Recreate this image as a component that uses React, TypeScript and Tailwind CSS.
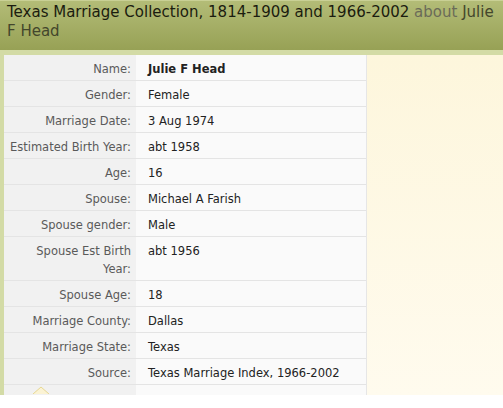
const rows: { label: string[]; value: string; bold?: boolean }[] = [
  { label: ['Name:'], value: 'Julie F Head', bold: true },
  { label: ['Gender:'], value: 'Female' },
  { label: ['Marriage Date:'], value: '3 Aug 1974' },
  { label: ['Estimated Birth Year:'], value: 'abt 1958' },
  { label: ['Age:'], value: '16' },
  { label: ['Spouse:'], value: 'Michael A Farish' },
  { label: ['Spouse gender:'], value: 'Male' },
  { label: ['Spouse Est Birth', 'Year:'], value: 'abt 1956' },
  { label: ['Spouse Age:'], value: '18' },
  { label: ['Marriage County:'], value: 'Dallas' },
  { label: ['Marriage State:'], value: 'Texas' },
  { label: ['Source:'], value: 'Texas Marriage Index, 1966-2002' },
]

export default function App() {
  return (
    <div className="h-[408px] w-[503px] bg-white font-['DejaVu_Sans',Verdana,sans-serif]">
      {/* Title bar */}
      <div className="h-[50px] border-t border-[#c9d095] bg-gradient-to-b from-[#b3bc77] to-[#97a155] px-[7px] pt-[2px] text-[15px] leading-[19px] text-[#1b1c0f]">
        Texas Marriage Collection, 1814-1909 and 1966-2002{' '}
        <span className="text-[#6a6b58]">about</span>{' '}
        <span className="text-[#43462c]">Julie F Head</span>
      </div>

      {/* Body */}
      <div className="flex h-[345px] bg-[#d3dba6] pl-[4px] pt-[5px]">
        <div className="flex w-[363px] flex-col border-r border-[#e6e6e6] text-[11.5px] leading-[18px]">
          {rows.map((r) => (
            <div key={r.label.join(' ')} className="flex border-b border-[#e4e4e4]">
              <div className="w-[132px] shrink-0 bg-[#f1f1f1] pb-[2px] pr-[5px] pt-[5px] text-right text-[#5a5a5a]">
                {r.label.map((l) => (
                  <div key={l}>{l}</div>
                ))}
              </div>
              <div
                className={
                  'flex-1 bg-[#fafafa] pb-[2px] pl-[12px] pt-[5px] text-[#222] ' +
                  (r.bold ? 'font-bold' : '')
                }
              >
                {r.value}
              </div>
            </div>
          ))}
          <div className="flex flex-1">
            <div className="relative w-[132px] shrink-0 bg-[#f1f1f1]">
              <svg className="absolute left-[28px] top-[1px]" width="18" height="8" viewBox="0 0 18 8">
                <path d="M1 8 L9 1 L17 8" fill="#fbf3d4" stroke="#e6d793" strokeWidth="1" />
              </svg>
            </div>
            <div className="flex-1 bg-[#fafafa]" />
          </div>
        </div>
        <div className="flex-1 bg-gradient-to-b from-[#fdf6dc] to-[#fffbee]" />
      </div>
    </div>
  )
}
